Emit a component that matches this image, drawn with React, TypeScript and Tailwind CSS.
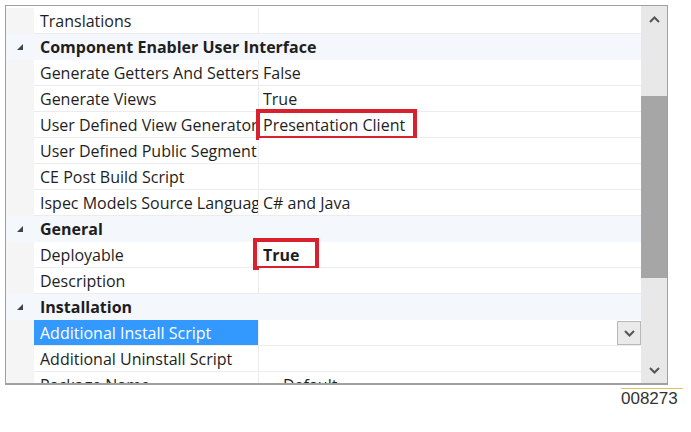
import React from 'react';

type Row =
  | { kind: 'cat'; label: string }
  | { kind: 'prop'; name: string; value?: string; box?: boolean; bold?: boolean; selected?: boolean; drop?: boolean };

const rows: Row[] = [
  { kind: 'prop', name: 'Translations' },
  { kind: 'cat', label: 'Component Enabler User Interface' },
  { kind: 'prop', name: 'Generate Getters And Setters', value: 'False' },
  { kind: 'prop', name: 'Generate Views', value: 'True' },
  { kind: 'prop', name: 'User Defined View Generator', value: 'Presentation Client', box: true },
  { kind: 'prop', name: 'User Defined Public Segment' },
  { kind: 'prop', name: 'CE Post Build Script' },
  { kind: 'prop', name: 'Ispec Models Source Language', value: 'C# and Java' },
  { kind: 'cat', label: 'General' },
  { kind: 'prop', name: 'Deployable', value: 'True', box: true, bold: true },
  { kind: 'prop', name: 'Description' },
  { kind: 'cat', label: 'Installation' },
  { kind: 'prop', name: 'Additional Install Script', selected: true, drop: true },
  { kind: 'prop', name: 'Additional Uninstall Script' },
  { kind: 'prop', name: 'Package Name', value: 'Default' },
];

const Chevron = ({ up }: { up?: boolean }) => (
  <svg width="11" height="7" viewBox="0 0 11 7">
    <path d={up ? 'M1 6 L5.5 1.5 L10 6' : 'M1 1 L5.5 5.5 L10 1'} stroke="#555" strokeWidth="2" fill="none" />
  </svg>
);

export default function App() {
  return (
    <div className="relative h-[432px] w-[691px] bg-white text-[16px] text-[#1e1e1e]" style={{ fontFamily: '"Open Sans", "Noto Sans", sans-serif' }}>
      <div className="ml-[5px] mt-[5px] flex h-[380px] w-[663px] overflow-hidden border border-[#a0a0a0] border-b-2">
        <div className="flex-1 overflow-hidden pt-[2px]">
          {rows.map((r, i) =>
            r.kind === 'cat' ? (
              <div key={i} className="flex h-[26px] items-center bg-[#f4f7fb]">
                <div className="flex w-[28px] shrink-0 justify-center">
                  <svg width="8" height="8" viewBox="0 0 8 8"><path d="M7 1 L7 7 L1 7 Z" fill="#444" /></svg>
                </div>
                <span className="pl-[6px] font-bold leading-none">{r.label}</span>
              </div>
            ) : (
              <div key={i} className="flex h-[26px] bg-[#f5f5f5]">
                <div className="w-[28px] shrink-0" />
                <div
                  className={`flex w-[225px] shrink-0 items-center overflow-hidden whitespace-nowrap border-b border-r border-[#ececec] pl-[6px] ${
                    r.selected ? 'bg-[#3399ff] text-white' : 'bg-white'
                  }`}
                >
                  {r.name}
                </div>
                <div className="relative flex flex-1 items-center border-b border-[#ececec] bg-white pl-[4px]">
                  {r.value && (
                    <span className={`${r.bold ? 'font-bold' : ''} ${r.value === 'Default' ? 'pl-[20px]' : ''}`}>{r.value}</span>
                  )}
                  {r.box && (
                    <div
                      className={`absolute border-[4px] border-[#d9202e] ${
                        r.bold ? 'left-[-6px] top-[-4px] h-[32px] w-[66px]' : 'left-[-3px] top-[-3px] h-[31px] w-[161px]'
                      }`}
                    />
                  )}
                  {r.drop && (
                    <div className="absolute right-0 top-[1px] flex h-[24px] w-[24px] items-center justify-center border border-[#b8b8b8] bg-[#eaeaea]">
                      <Chevron />
                    </div>
                  )}
                </div>
              </div>
            ),
          )}
        </div>
        <div className="flex w-[26px] shrink-0 flex-col bg-[#e8e8e8]">
          <div className="flex h-[26px] items-center justify-center"><Chevron up /></div>
          <div className="h-[64px]" />
          <div className="h-[182px] bg-[#a6a6a6]" />
          <div className="flex-1" />
          <div className="flex h-[26px] items-center justify-center"><Chevron /></div>
        </div>
      </div>
      <div className="ml-[621px] mt-[3px] w-[62px] border-t border-[#e0c060] pt-[1px] text-[17px] leading-none text-[#333]" style={{ fontFamily: '"Liberation Sans", Arial, sans-serif' }}>
        008273
      </div>
    </div>
  );
}
